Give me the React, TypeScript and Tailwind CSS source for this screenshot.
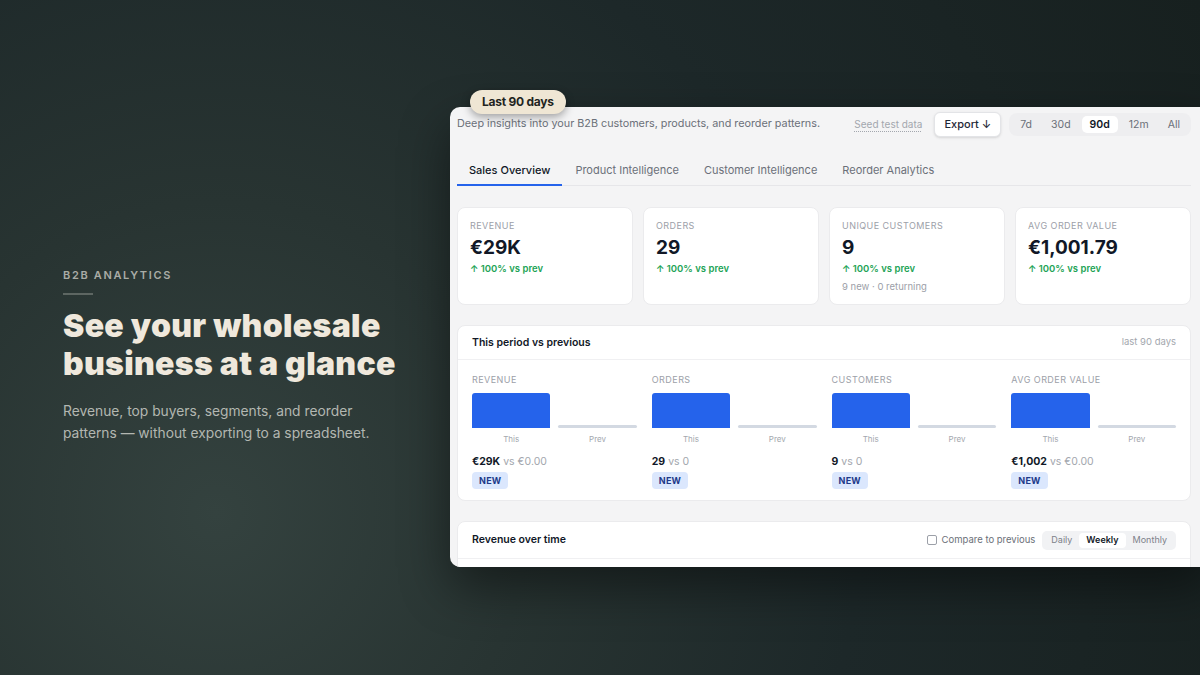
import React, { useState } from 'react';

const stats = [
    { label: 'Revenue', value: '€29K', change: '100% vs prev' },
    { label: 'Orders', value: '29', change: '100% vs prev' },
    { label: 'Unique Customers', value: '9', change: '100% vs prev', sub: '9 new · 0 returning' },
    { label: 'Avg Order Value', value: '€1,001.79', change: '100% vs prev' },
];

const compare = [
    { label: 'Revenue', now: '€29K', prev: '€0.00' },
    { label: 'Orders', now: '29', prev: '0' },
    { label: 'Customers', now: '9', prev: '0' },
    { label: 'Avg Order Value', now: '€1,002', prev: '€0.00' },
];

const tabs = ['Sales Overview', 'Product Intelligence', 'Customer Intelligence', 'Reorder Analytics'];
const ranges = ['7d', '30d', '90d', '12m', 'All'];
const intervals = ['Daily', 'Weekly', 'Monthly'];

function StatCard({ label, value, change, sub }: { label: string; value: string; change: string; sub?: string }) {
    return (
        <div className="bg-white rounded-[8px] border border-[#ebebed] px-[12px] pt-[12px] h-[98px]">
            <div className="text-[9px] leading-[12px] uppercase tracking-[0.05em] text-[#9ca0a8]">{label}</div>
            <div className="mt-[4px] text-[19px] leading-[24px] font-bold text-[#111827]">{value}</div>
            <div className="mt-[2px] text-[9.5px] leading-[14px] font-semibold text-[#22a355]">↑ {change}</div>
            {sub && <div className="mt-[4px] text-[9.5px] leading-[14px] text-[#9ca0a8]">{sub}</div>}
        </div>
    );
}

function CompareColumn({ label, now, prev }: { label: string; now: string; prev: string }) {
    return (
        <div>
            <div className="text-[9px] leading-[12px] uppercase tracking-[0.05em] text-[#9ca0a8]">{label}</div>
            <div className="mt-[7px] flex items-end gap-[8px] h-[35px]">
                <div className="flex-1 h-[35px] bg-[#2563eb] rounded-t-[3px]" />
                <div className="flex-1 h-[3px] bg-[#d3d9e2] rounded-[2px]" />
            </div>
            <div className="mt-[6px] flex gap-[8px] text-[8px] leading-[10px] text-[#a3a7ae]">
                <div className="flex-1 text-center">This</div>
                <div className="flex-1 text-center">Prev</div>
            </div>
            <div className="mt-[11px] text-[10.5px] leading-[14px]">
                <span className="font-bold text-[#111827]">{now}</span>
                <span className="text-[#a3a7ae]"> vs {prev}</span>
            </div>
            <div className="mt-[3px] flex">
                <div className="h-[17px] px-[7px] flex items-center rounded-[4px] bg-[#dbe7fd] text-[9px] font-bold text-[#1e3a8a] tracking-[0.03em]">
                    NEW
                </div>
            </div>
        </div>
    );
}

export default function App() {
    const [range, setRange] = useState('90d');
    const [tab, setTab] = useState('Sales Overview');
    const [interval, setInterval] = useState('Weekly');

    return (
        <div className="w-[1200px] h-[675px] overflow-hidden flex bg-[radial-gradient(circle_at_18%_76%,#34423f_0%,#283432_28%,#1d2829_58%,#17201f_100%)] font-['Inter',sans-serif]">
            {/* pitch copy */}
            <div className="w-[450px] shrink-0 pl-[63px] pt-[268px] flex flex-col">
                <div className="text-[11px] leading-[14px] font-semibold tracking-[0.15em] text-[#a9aca6]">B2B ANALYTICS</div>
                <div className="mt-[11px] w-[30px] h-[2px] bg-[#5d6662]" />
                <h1 className="mt-[12px] text-[32px] leading-[38px] font-black tracking-[0.01em] text-[#efe8dc] whitespace-nowrap">
                    See your wholesale
                    <br />
                    business at a glance
                </h1>
                <p className="mt-[17px] text-[13.8px] leading-[22px] text-[#b3b7b1] whitespace-nowrap">
                    Revenue, top buyers, segments, and reorder
                    <br />
                    patterns — without exporting to a spreadsheet.
                </p>
            </div>

            {/* dashboard preview */}
            <div className="relative mt-[107px] shrink-0 w-[760px] h-[460px]">
                <div className="absolute -top-[17px] left-[20px] z-10 h-[24px] px-[12px] flex items-center rounded-full bg-[#efe6d4] shadow-[0_3px_8px_rgba(0,0,0,0.35)] text-[12px] font-bold tracking-[-0.02em] text-[#1f2421]">
                    Last 90 days
                </div>
                <div className="w-full h-full rounded-[10px] bg-[#f4f4f5] overflow-hidden shadow-[0_20px_50px_rgba(0,0,0,0.45)] pl-[7px] pr-[19px] pt-[5px]">
                    <div className="flex items-center h-[25px] whitespace-nowrap">
                        <div className="text-[10.8px] text-[#6b7079]">Deep insights into your B2B customers, products, and reorder patterns.</div>
                        <div className="ml-auto text-[10px] text-[#a3a7ae] underline decoration-dotted underline-offset-[3px]">Seed test data</div>
                        <button className="ml-[12px] h-[25px] px-[9px] rounded-[6px] bg-white border border-[#e3e4e7] shadow-sm text-[11px] font-medium text-[#1f2937]">
                            Export ↓
                        </button>
                        <div className="ml-[8px] flex items-center gap-[3px] p-[3px] rounded-[8px] bg-[#eeeef0]">
                            {ranges.map((r) => (
                                <button
                                    key={r}
                                    onClick={() => setRange(r)}
                                    className={`h-[17px] px-[8px] rounded-[5px] text-[10.5px] ${range === r ? 'bg-white font-semibold text-[#111827]' : 'text-[#6b7079]'}`}
                                >
                                    {r}
                                </button>
                            ))}
                        </div>
                    </div>

                    <div className="mt-[25px] flex gap-[1px] border-b border-[#e6e6e9]">
                        {tabs.map((t) => (
                            <button
                                key={t}
                                onClick={() => setTab(t)}
                                className={`px-[12px] pb-[6px] text-[11px] leading-[16px] whitespace-nowrap border-b-2 -mb-px ${tab === t ? 'border-[#2563eb] font-medium text-[#111827]' : 'border-transparent text-[#6b7079]'}`}
                            >
                                {t}
                            </button>
                        ))}
                    </div>

                    <div className="mt-[21px] grid grid-cols-4 gap-[10px]">
                        {stats.map((s) => (
                            <StatCard key={s.label} {...s} />
                        ))}
                    </div>

                    <div className="mt-[20px] bg-white rounded-[8px] border border-[#ebebed]">
                        <div className="flex items-center justify-between h-[34px] px-[14px] border-b border-[#f0f0f2]">
                            <div className="text-[10.5px] font-semibold text-[#111827]">This period vs previous</div>
                            <div className="text-[9.5px] text-[#a3a7ae]">last 90 days</div>
                        </div>
                        <div className="grid grid-cols-4 gap-x-[15px] px-[14px] pt-[14px] pb-[11px]">
                            {compare.map((c) => (
                                <CompareColumn key={c.label} {...c} />
                            ))}
                        </div>
                    </div>

                    <div className="mt-[20px] bg-white rounded-[8px] border border-[#ebebed]">
                        <div className="flex items-center h-[37px] px-[14px] border-b border-[#f0f0f2]">
                            <div className="text-[10.5px] font-semibold text-[#111827]">Revenue over time</div>
                            <label className="ml-auto flex items-center gap-[5px] text-[9.5px] text-[#6b7079]">
                                <span className="w-[10px] h-[10px] rounded-[2px] border border-[#9ca0a8] bg-white" />
                                Compare to previous
                            </label>
                            <div className="ml-[7px] flex items-center p-[2px] rounded-[5px] bg-[#f1f2f4]">
                                {intervals.map((i) => (
                                    <button
                                        key={i}
                                        onClick={() => setInterval(i)}
                                        className={`h-[15px] px-[7px] rounded-[4px] text-[9px] ${interval === i ? 'bg-white font-semibold text-[#111827]' : 'text-[#7d818a]'}`}
                                    >
                                        {i}
                                    </button>
                                ))}
                            </div>
                        </div>
                        <div className="h-[40px]" />
                    </div>
                </div>
            </div>
        </div>
    );
}
